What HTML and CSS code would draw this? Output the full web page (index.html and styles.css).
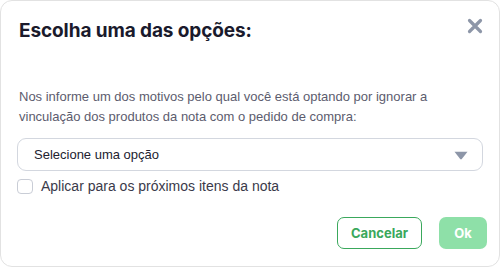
FILE: index.html
```html
<!DOCTYPE html>
<html lang="pt-BR">
<head>
<meta charset="utf-8">
<link rel="stylesheet" href="styles.css">
</head>
<body>
<div class="dialog">
  <div class="header">
    <h1 class="title">Escolha uma das opções:</h1>
    <button class="close" aria-label="Fechar">
      <svg width="16" height="16" viewBox="0 0 16 16"><path d="M2.5 2.5 L13.5 13.5 M13.5 2.5 L2.5 13.5" stroke="#8d96a8" stroke-width="3.2" stroke-linecap="round"/></svg>
    </button>
  </div>
  <p class="desc">Nos informe um dos motivos pelo qual você está optando por ignorar a vinculação dos produtos da nota com o pedido de compra:</p>
  <div class="select">
    <span>Selecione uma opção</span>
    <svg class="caret" width="14" height="9" viewBox="0 0 14 9"><path d="M0.5 0.8 H13.5 L7.8 8 Q7 8.8 6.2 8 Z" fill="#8d96a8"/></svg>
  </div>
  <label class="check">
    <span class="box"></span>
    <span>Aplicar para os próximos itens da nota</span>
  </label>
  <div class="actions">
    <button class="btn btn-outline">Cancelar</button>
    <button class="btn btn-ok">Ok</button>
  </div>
</div>
</body>
</html>
```
FILE: styles.css
```css
html, body { margin: 0; padding: 0; background: #ffffff; }
body { width: 500px; height: 267px; overflow: hidden; }
.dialog {
  box-sizing: border-box;
  width: 500px;
  height: 267px;
  border: 1px solid #e2e2e2;
  border-radius: 12px;
  padding: 16px 16px 0 16px;
  font-family: "Liberation Sans", Arial, sans-serif;
}
.header { display: flex; justify-content: space-between; align-items: flex-start; }
.title {
  margin: 0;
  padding: 1px 0 0 2px;
  font-family: Inter, "Noto Sans", sans-serif;
  font-weight: 700;
  font-size: 19px;
  line-height: 26px;
  color: #1a1a2c;
  letter-spacing: -0.1px;
}
.close {
  border: 0; background: none; padding: 0;
  width: 16px; height: 16px; margin-top: 1px;
  display: block;
}
.desc {
  margin: 43px 0 0 2px;
  font-size: 13px;
  line-height: 20px;
  color: #5c5c6e;
}
.select {
  box-sizing: border-box;
  margin-top: 11px;
  height: 33px;
  border: 1px solid #d3d7df;
  border-radius: 9px;
  display: flex;
  align-items: center;
  justify-content: space-between;
  padding: 0 14px 0 16px;
  font-size: 13px;
  color: #222230;
}
.caret { display: block; margin-top: 1px; }
.check {
  display: flex;
  align-items: center;
  gap: 8px;
  margin-top: 7px;
  font-size: 14px;
  color: #3a3a4a;
}
.box {
  box-sizing: border-box;
  width: 16px; height: 15px;
  border: 1.5px solid #c9cdd6;
  border-radius: 4px;
}
.actions {
  display: flex;
  justify-content: flex-end;
  gap: 17px;
  margin-top: 23px;
  margin-right: -4px;
}
.btn {
  box-sizing: border-box;
  height: 32px;
  border-radius: 7px;
  font-family: Inter, "Noto Sans", sans-serif;
  font-weight: 700;
  font-size: 13px;
  cursor: pointer;
}
.btn-outline {
  width: 85px;
  background: #fff;
  border: 1px solid #3aa85c;
  color: #3aa85c;
}
.btn-ok {
  width: 48px;
  background: #8ee0a8;
  border: 0;
  color: #ffffff;
}
```
